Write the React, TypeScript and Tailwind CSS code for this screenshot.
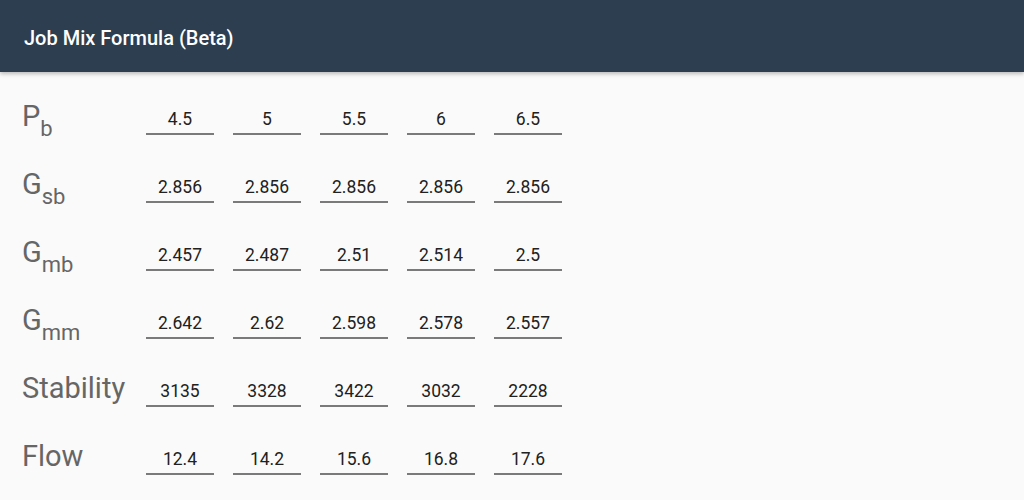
import React from 'react';

type Row = {
  base: string;
  sub?: string;
  values: string[];
};

const rows: Row[] = [
  { base: 'P', sub: 'b', values: ['4.5', '5', '5.5', '6', '6.5'] },
  { base: 'G', sub: 'sb', values: ['2.856', '2.856', '2.856', '2.856', '2.856'] },
  { base: 'G', sub: 'mb', values: ['2.457', '2.487', '2.51', '2.514', '2.5'] },
  { base: 'G', sub: 'mm', values: ['2.642', '2.62', '2.598', '2.578', '2.557'] },
  { base: 'Stability', values: ['3135', '3328', '3422', '3032', '2228'] },
  { base: 'Flow', values: ['12.4', '14.2', '15.6', '16.8', '17.6'] },
];

export default function App() {
  return (
    <div className="w-[1024px] h-[500px] overflow-hidden bg-[#fafafa] font-['Roboto',sans-serif]">
      {/* App bar */}
      <header className="h-[72px] pt-[4px] bg-[#2c3e50] flex items-center px-6 shadow-[0_2px_4px_rgba(0,0,0,0.25)] relative z-10">
        <h1 className="text-white text-[20px] font-medium">Job Mix Formula (Beta)</h1>
      </header>

      {/* Formula rows */}
      <main className="pt-[14px] pl-[22px]">
        {rows.map((row, i) => (
          <div key={i} className="h-[68px] flex items-center">
            <div className="w-[124px] -mt-[8px] text-[29px] leading-none text-[#666666] whitespace-nowrap">
              {row.base}
              {row.sub && (
                <span className="text-[22px] relative top-[10px]">{row.sub}</span>
              )}
            </div>
            <div className="flex gap-[19px]">
              {row.values.map((v, j) => (
                <div
                  key={j}
                  className="w-[68px] h-[30px] flex items-center justify-center border-b-2 border-[#7a7a7a] text-[17.5px] text-[#212121]"
                >
                  {v}
                </div>
              ))}
            </div>
          </div>
        ))}
      </main>
    </div>
  );
}
